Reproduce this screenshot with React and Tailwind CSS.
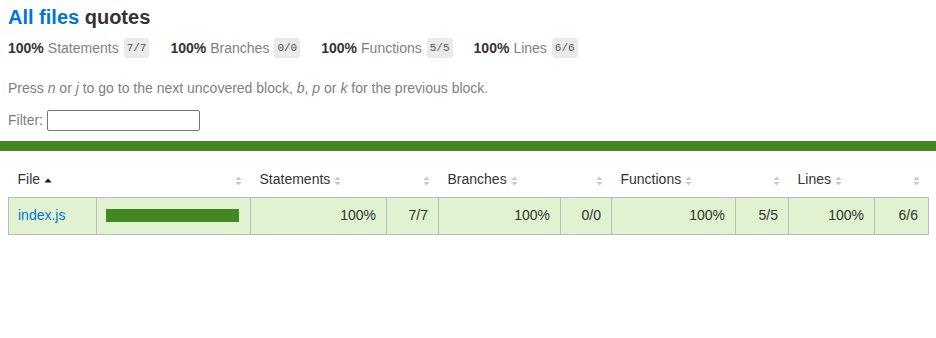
import React from 'react'

const STATS = [
  { label: 'Statements', frac: '7/7' },
  { label: 'Branches', frac: '0/0' },
  { label: 'Functions', frac: '5/5' },
  { label: 'Lines', frac: '6/6' },
]

function Sorter() {
  return (
    <svg width="7" height="10" viewBox="0 0 7 10" className="inline-block align-middle">
      <path d="M3.5 0.5 L6.5 4 L0.5 4 Z" fill="#c8c8c8" />
      <path d="M3.5 9.5 L6.5 6 L0.5 6 Z" fill="#c8c8c8" />
    </svg>
  )
}

function SortAsc() {
  return (
    <svg width="8" height="5" viewBox="0 0 8 5" className="inline-block align-middle">
      <path d="M4 0.5 L7.5 4.5 L0.5 4.5 Z" fill="#111" />
    </svg>
  )
}

const HEAD = [
  { w: 'w-[88px]', label: 'File', asc: true },
  { w: 'w-[154px]', right: true },
  { w: 'w-[136px]', label: 'Statements' },
  { w: 'w-[52px]', right: true },
  { w: 'w-[122px]', label: 'Branches' },
  { w: 'w-[51px]', right: true },
  { w: 'w-[124px]', label: 'Functions' },
  { w: 'w-[53px]', right: true },
  { w: 'w-[86px]', label: 'Lines' },
  { w: 'w-[54px]', right: true },
]

const ROW = [
  ['100%', '7/7'],
  ['100%', '0/0'],
  ['100%', '5/5'],
  ['100%', '6/6'],
]

export default function App() {
  return (
    <div className="min-h-[338px] bg-white text-[14px] text-[#333]" style={{ fontFamily: '"Liberation Sans", Arial, sans-serif' }}>
      <div className="px-2 pt-[6px]">
        <h1 className="text-[20px] font-bold leading-[22px]">
          <a className="text-[#0074d9]">All files</a> quotes
        </h1>
        <div className="mt-[10px] flex h-[20px] items-center gap-[21px] text-[14px]">
          {STATS.map((s) => (
            <div key={s.label} className="flex items-center">
              <span className="font-bold text-[#333]">100%</span>
              <span className="ml-[4px] text-[#7f7f7f]">{s.label}</span>
              <span
                className="ml-[5px] rounded-[3px] bg-[#eaeaea] px-[3px] py-[4px] text-[11px] leading-[12px] text-[#555]"
                style={{ fontFamily: '"Liberation Mono", monospace' }}
              >
                {s.frac}
              </span>
            </div>
          ))}
        </div>
        <p className="mt-[22px] text-[14px] leading-[16px] text-[#7f7f7f]">
          Press <em>n</em> or <em>j</em> to go to the next uncovered block, <em>b</em>, <em>p</em> or <em>k</em> for the previous block.
        </p>
        <div className="mt-[14px] flex h-[21px] items-center text-[14px] text-[#7f7f7f]">
          <span>Filter:</span>
          <input type="text" className="ml-[4px] h-[21px] w-[153px] rounded-[2px] border border-[#767676] bg-white" />
        </div>
      </div>
      <div className="mt-[10px] h-[10px] bg-[#428822]" />
      <div className="px-2 pt-[12px]">
        <table className="w-[920px] table-fixed border-collapse text-[14px]">
          <thead>
            <tr className="h-[34px]">
              {HEAD.map((h, i) => (
                <th
                  key={i}
                  className={`${h.w} px-[9px] font-normal ${h.right ? 'text-right' : 'text-left'}`}
                >
                  {h.label && <span>{h.label} </span>}
                  {h.asc ? <SortAsc /> : <Sorter />}
                </th>
              ))}
            </tr>
          </thead>
          <tbody>
            <tr className="h-[37px] bg-[#e0f2cf]">
              <td className="border border-[#bbb] px-[9px]">
                <a className="text-[#0074d9]">index.js</a>
              </td>
              <td className="border border-[#bbb] px-[9px]">
                <div className="h-[13px] w-[133px] bg-[#428822]" />
              </td>
              {ROW.map(([pct, frac], i) => (
                <React.Fragment key={i}>
                  <td className="border border-[#bbb] px-[10px] text-right">{pct}</td>
                  <td className="border border-[#bbb] px-[10px] text-right">{frac}</td>
                </React.Fragment>
              ))}
            </tr>
          </tbody>
        </table>
      </div>
    </div>
  )
}
